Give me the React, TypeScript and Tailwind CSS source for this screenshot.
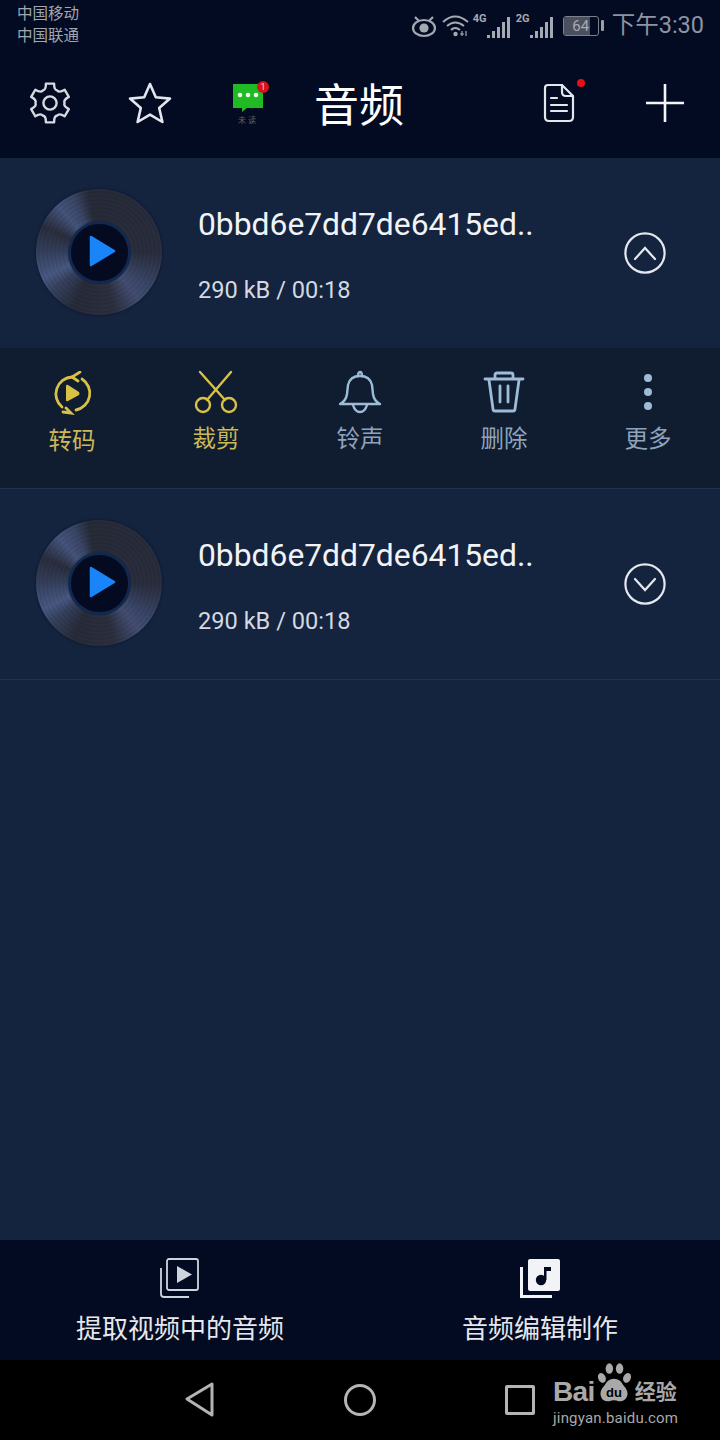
import * as React from "react";

const FONT = "font-['Roboto','Noto_Sans_CJK_SC',sans-serif]";

function GearIcon() {
  const teeth = [0, 60, 120, 180, 240, 300];
  // gear outline built from six rounded teeth
  let d = "";
  teeth.forEach((deg, i) => {
    const pt = (r: number, a: number) => {
      const rad = ((deg + a - 90) * Math.PI) / 180;
      return `${(21 + r * Math.cos(rad)).toFixed(2)} ${(21 + r * Math.sin(rad)).toFixed(2)}`;
    };
    d += `${i === 0 ? "M" : "L"}${pt(14.5, -30)} Q${pt(13.5, -17)} ${pt(19.8, -12)} L${pt(19.8, 12)} Q${pt(13.5, 17)} ${pt(14.5, 30)} `;
  });
  return (
    <svg width="42" height="42" viewBox="0 0 42 42" fill="none" stroke="#d5d9e2" strokeWidth="2.4" strokeLinejoin="round">
      <path d={d + "Z"} />
      <circle cx="21" cy="21" r="6.6" />
    </svg>
  );
}

function StarIcon() {
  return (
    <svg width="46" height="44" viewBox="0 0 46 44" fill="none" stroke="#e3e6ec" strokeWidth="2.6" strokeLinejoin="round">
      <path d="M23 3 L28.8 16.2 L43 17.6 L32.2 27 L35.4 41 L23 33.6 L10.6 41 L13.8 27 L3 17.6 L17.2 16.2 Z" />
    </svg>
  );
}

function UnreadBadge() {
  return (
    <div className="relative flex h-[46px] w-[36px] flex-col items-center">
      <svg width="30" height="28" viewBox="0 0 30 28" className="mt-[3px]">
        <path d="M0 0 H30 V24 H14 L9 28 V24 H0 Z" fill="#20ba24" />
        <circle cx="7" cy="11" r="2.3" fill="#e8f8e8" />
        <circle cx="15" cy="11" r="2.3" fill="#e8f8e8" />
        <circle cx="23" cy="11" r="2.3" fill="#e8f8e8" />
      </svg>
      <span className="mt-[4px] text-[8px] leading-[10px] tracking-[2px] text-[#5d6470]">未读</span>
      <span className="absolute right-[-3px] top-0 flex h-3 w-3 items-center justify-center rounded-full bg-[#d8121a] text-[9px] leading-none text-[#f4d0d0]">
        1
      </span>
    </div>
  );
}

function DocIcon() {
  return (
    <div className="relative h-[40px] w-[32px]">
      <svg width="32" height="40" viewBox="0 0 32 40" fill="none" stroke="#e3e6ec" strokeWidth="2.2" strokeLinejoin="round" strokeLinecap="round">
        <path d="M5 2 H19 L30 13 V34 Q30 38 26 38 H6 Q2 38 2 34 V5 Q2 2 5 2 Z" />
        <path d="M19 2 V9 Q19 13 23 13 H30" />
        <path d="M8 15 H14 M8 22 H24 M8 28 H24" />
      </svg>
      <span className="absolute right-[-10px] top-[-4px] h-2 w-2 rounded-full bg-[#e5101a]" />
    </div>
  );
}

function SignalBars({ label, className }: { label: string; className?: string }) {
  const heights = [3, 7, 11, 16, 21];
  return (
    <div className={`relative flex h-[24px] w-[35px] items-end justify-end gap-[2.4px] ${className ?? ""}`}>
      <span className="absolute left-[-2px] top-0 text-[11px] font-bold leading-[10px] text-[#a5a9b1]">{label}</span>
      {heights.map((h) => (
        <div key={h} className="w-[2.6px] bg-[#a5a9b1]" style={{ height: h }} />
      ))}
    </div>
  );
}

function StatusBar() {
  return (
    <div className="flex h-[50px] justify-between pl-[17px] pr-[16px]">
      <div className="pt-[3px] text-[15.5px] leading-[22px] text-[#a2a6ae]">
        <div>中国移动</div>
        <div>中国联通</div>
      </div>
      <div className="flex h-[50px] items-center pt-[1px] text-[#9aa0aa]">
        <svg width="26" height="24" viewBox="0 0 26 24" fill="none" stroke="#a5a9b1" strokeWidth="2.2">
          <ellipse cx="13" cy="14" rx="11" ry="8" />
          <circle cx="13" cy="14" r="4.6" fill="#a5a9b1" stroke="none" />
          <path d="M4 3 L8 7 M22 3 L18 7" />
        </svg>
        <svg width="28" height="24" viewBox="0 0 28 24" fill="none" stroke="#a5a9b1" strokeWidth="2" className="ml-[5px]">
          <path d="M1 8 Q13 -3 26 8 M5 12 Q13 5 22 12 M9 16 Q13 12 18 16" />
          <circle cx="13.5" cy="20" r="2.2" fill="#a5a9b1" stroke="none" />
          <path d="M20 22 V17 M24 22 V17 M18 20 H22" strokeWidth="1.2" />
        </svg>
        <SignalBars label="4G" className="ml-[5px]" />
        <SignalBars label="2G" className="ml-[8px]" />
        <div className="ml-[10px] flex items-center">
          <div className="relative h-[20px] w-[36px] overflow-hidden rounded-[3px] border border-[#7b808a]">
            <div className="h-full w-[26px] bg-[#4b505e]" />
            <span className="absolute inset-0 text-center text-[15px] leading-[18px] text-[#a8acb4]">64</span>
          </div>
          <div className="ml-[2px] h-[11px] w-[3px] rounded-[1px] bg-[#9aa0aa]" />
        </div>
        <span className="ml-[8px] text-[23.5px] leading-none text-[#8f94a0]">下午3:30</span>
      </div>
    </div>
  );
}

function Header() {
  return (
    <div className="flex h-[108px] items-center pb-[2px]">
      <div className="flex w-[100px] justify-center"><GearIcon /></div>
      <div className="flex w-[100px] justify-center"><StarIcon /></div>
      <div className="flex w-[96px] justify-center pt-[2px]"><UnreadBadge /></div>
      <div className="ml-[18px] w-[228px] pt-[6px] text-[45px] leading-none text-white">音频</div>
      <div className="ml-[1px] flex w-[32px] justify-center"><DocIcon /></div>
      <div className="ml-[71px]">
        <svg width="38" height="38" viewBox="0 0 38 38" stroke="#f4f5f7" strokeWidth="2.6" className="block">
          <path d="M0 19 H38 M19 0 V38" />
        </svg>
      </div>
    </div>
  );
}

function Vinyl() {
  return (
    <div className="flex h-[126px] w-[126px] items-center justify-center rounded-full bg-[repeating-radial-gradient(circle,rgba(0,0,0,0.1)_0px,rgba(0,0,0,0)_2px,rgba(0,0,0,0.1)_4px),conic-gradient(from_0deg,#282c3a_0deg,#2a2e3e_90deg,#3b486a_125deg,#454f74_140deg,#2c3040_165deg,#282c3a_205deg,#36425f_230deg,#4a5a85_245deg,#35415f_270deg,#2a2e3e_295deg,#47567f_318deg,#3a4768_335deg,#282c3a_350deg)] shadow-[0_0_3px_#0a1226]">
      <div className="flex h-[63px] w-[63px] items-center justify-center rounded-full border-[3px] border-[#12284f] bg-[#040b20]">
        <svg width="28" height="32" viewBox="0 0 28 32" className="ml-[5px] mb-[2px]">
          <path d="M3 2 L26 16 L3 30 Z" fill="#1a85f8" stroke="#1a85f8" strokeWidth="2.5" strokeLinejoin="round" />
        </svg>
      </div>
    </div>
  );
}

function Chevron({ up }: { up: boolean }) {
  return (
    <svg width="42" height="42" viewBox="0 0 42 42" fill="none" stroke="#e5e8ee" strokeWidth="2.2" strokeLinecap="round">
      <circle cx="21" cy="21" r="19.6" />
      <path d={up ? "M11 27 L21 16 L31 27" : "M11 16 L21 27 L31 16"} />
    </svg>
  );
}

function AudioRow({ up, last }: { up: boolean; last?: boolean }) {
  return (
    <div className={`flex items-center ${last ? "h-[191px] border-b border-[#22324d]" : "h-[190px]"}`}>
      <div className="ml-[36px] pb-[2px]">
        <Vinyl />
      </div>
      <div className="ml-[36px] w-[425px] pt-[2px]">
        <div className="text-[31.8px] leading-[40px] text-[#f1f3f6]">0bbd6e7dd7de6415ed..</div>
        <div className="mt-[31px] text-[23.6px] leading-[30px] text-[#d5d9e0]">290 kB / 00:18</div>
      </div>
      <div className="ml-[1px]">
        <Chevron up={up} />
      </div>
    </div>
  );
}

function ActionItem({ icon, label, color, offset }: { icon: React.ReactNode; label: string; color: string; offset?: string }) {
  return (
    <div className="flex w-[144px] flex-col items-center">
      <div className="flex h-[48px] items-center">{icon}</div>
      <div className={`text-[23.5px] leading-[30px] ${offset ?? "mt-[8px]"}`} style={{ color }}>
        {label}
      </div>
    </div>
  );
}

function ActionBar() {
  const gold = "#d8c145";
  const blue = "#9dbcd8";
  return (
    <div className="flex h-[141px] border-b border-[#22324d] bg-[#101c30] pt-[20px]">
      <ActionItem
        label="转码"
        color="#cbb957"
        offset="mt-[10px]"
        icon={
          <svg width="40" height="46" viewBox="0 0 40 46" fill="none" stroke={gold} strokeWidth="2.8" strokeLinecap="round" className="mt-[4px]">
            <path d="M10 36 A17 17 0 0 1 20 6 M30 8 A17 17 0 0 1 24 39" />
            <path d="M28 1 L20 6 L26 10 M11 41 L19 42 L14 37" />
            <path d="M14 15 Q14 13 16 14 L27 21 Q28 23 27 24 L16 30 Q14 31 14 29 Z" fill={gold} stroke="none" />
          </svg>
        }
      />
      <ActionItem
        label="裁剪"
        color="#cbb957"
        icon={
          <svg width="44" height="44" viewBox="0 0 44 44" fill="none" stroke={gold} strokeWidth="2.4" strokeLinecap="round">
            <path d="M6 2 L31 30 M37 2 L13 30" />
            <circle cx="9" cy="35" r="7" />
            <circle cx="35" cy="35" r="7" />
          </svg>
        }
      />
      <ActionItem
        label="铃声"
        color="#8fa3bb"
        icon={
          <svg width="44" height="44" viewBox="0 0 44 44" fill="none" stroke={blue} strokeWidth="2.4" strokeLinecap="round" strokeLinejoin="round">
            <path d="M2 34 H42 Q36 31 35 24 L34 15 Q32 6 22 6 Q12 6 10 15 L9 24 Q8 31 2 34 Z" />
            <path d="M20 6 Q20 2 22 2 Q24 2 24 6 M15 35 Q17 42 22 42 Q27 42 29 35" />
          </svg>
        }
      />
      <ActionItem
        label="删除"
        color="#8fa3bb"
        icon={
          <svg width="42" height="42" viewBox="0 0 42 42" fill="none" stroke={blue} strokeWidth="2.8" strokeLinecap="round" strokeLinejoin="round">
            <path d="M2 8 H40 M12 7 V4 Q12 2 14 2 H28 Q30 2 30 4 V7" />
            <path d="M6 9 L10 38 Q10 40 12 40 H30 Q32 40 32 38 L36 9" />
            <path d="M17 15 V31 M25 15 V31" />
          </svg>
        }
      />
      <ActionItem
        label="更多"
        color="#8fa3bb"
        icon={
          <div className="flex flex-col gap-[6px]">
            <div className="h-2 w-2 rounded-full bg-[#9dbcd8]" />
            <div className="h-2 w-2 rounded-full bg-[#9dbcd8]" />
            <div className="h-2 w-2 rounded-full bg-[#9dbcd8]" />
          </div>
        }
      />
    </div>
  );
}

function BottomTabs() {
  return (
    <div className="flex h-[120px] bg-[#020b22]">
      <div className="flex w-[360px] flex-col items-center pt-[18px]">
        <svg width="40" height="40" viewBox="0 0 40 40" fill="none" stroke="#d0d4dc" strokeWidth="1.8" strokeLinejoin="round">
          <rect x="7" y="1" width="31" height="31" rx="2" />
          <path d="M1 10 V36 Q1 39 4 39 H29" />
          <path d="M17 8 L32 16.5 L17 25 Z" fill="#d0d4dc" stroke="none" />
        </svg>
        <span className="mt-[14px] text-[26px] leading-[34px] text-[#e6e8ed]">提取视频中的音频</span>
      </div>
      <div className="flex w-[360px] flex-col items-center pt-[18px]">
        <svg width="40" height="40" viewBox="0 0 40 40" fill="none">
          <rect x="8" y="1" width="32" height="32" rx="2" fill="#f2f3f6" />
          <path d="M1.5 9 V38.5 H32" stroke="#f2f3f6" strokeWidth="3" />
          <circle cx="21" cy="22" r="5.2" fill="#020b22" />
          <path d="M24 22 V9 H31 V13 H26.5 V22 Z" fill="#020b22" />
        </svg>
        <span className="mt-[14px] text-[26px] leading-[34px] text-[#e6e8ed]">音频编辑制作</span>
      </div>
    </div>
  );
}

// watermark sitting over the navigation bar
function BaiduMark() {
  return (
    <div className="absolute left-[553px] top-[3px] w-[140px] text-[#a9a9a9]">
      <div className="flex h-[41px] items-end whitespace-nowrap">
        <span className="font-['Liberation_Sans',sans-serif] text-[28px] font-bold leading-[24px] tracking-[-0.6px]">Bai</span>
        <svg width="38" height="41" viewBox="0 0 40 44" className="shrink-0">
          <ellipse cx="7" cy="16" rx="4" ry="5.4" fill="#a9a9a9" transform="rotate(-25 7 16)" />
          <ellipse cx="15" cy="6" rx="4" ry="5.6" fill="#a9a9a9" />
          <ellipse cx="26" cy="6" rx="4" ry="5.6" fill="#a9a9a9" />
          <ellipse cx="34" cy="16" rx="4" ry="5.4" fill="#a9a9a9" transform="rotate(25 34 16)" />
          <path d="M20 17 Q27 17 30 24 Q36 30 34 36 Q31 42 25 41 Q20 39 15 41 Q8 42 6 36 Q4 30 10 24 Q13 17 20 17 Z" fill="#a9a9a9" />
          <text x="20" y="37" textAnchor="middle" fontSize="14" fontWeight="700" fill="#000" fontFamily="Liberation Sans, sans-serif">du</text>
        </svg>
        <span className="ml-[2px] text-[21px] font-bold leading-[24px]">经验</span>
      </div>
      <div className="mt-[5px] whitespace-nowrap text-[15px] leading-[18px] tracking-[0.2px]">jingyan.baidu.com</div>
    </div>
  );
}

function NavBar() {
  return (
    <div className="relative flex h-[80px] items-center bg-black">
      <div className="ml-[184px]">
        <svg width="32" height="36" viewBox="0 0 32 36" fill="none" stroke="#b4b4b4" strokeWidth="3" strokeLinejoin="round" className="block">
          <path d="M28 2 V33 L3 17 Z" />
        </svg>
      </div>
      <div className="ml-[128px] h-8 w-8 rounded-full border-[3px] border-[#b4b4b4]" />
      <div className="ml-[129px] h-[30px] w-[30px] rounded-[2px] border-[3px] border-[#b4b4b4]" />
      <BaiduMark />
    </div>
  );
}

export default function App() {
  return (
    <div className={`flex h-[1440px] w-[720px] flex-col overflow-hidden bg-[#14243f] ${FONT}`}>
      <div className="h-[158px] bg-[#020b22]">
        <StatusBar />
        <Header />
      </div>
      <AudioRow up />
      <ActionBar />
      <AudioRow up={false} last />
      <div className="flex-1" />
      <BottomTabs />
      <NavBar />
    </div>
  );
}
